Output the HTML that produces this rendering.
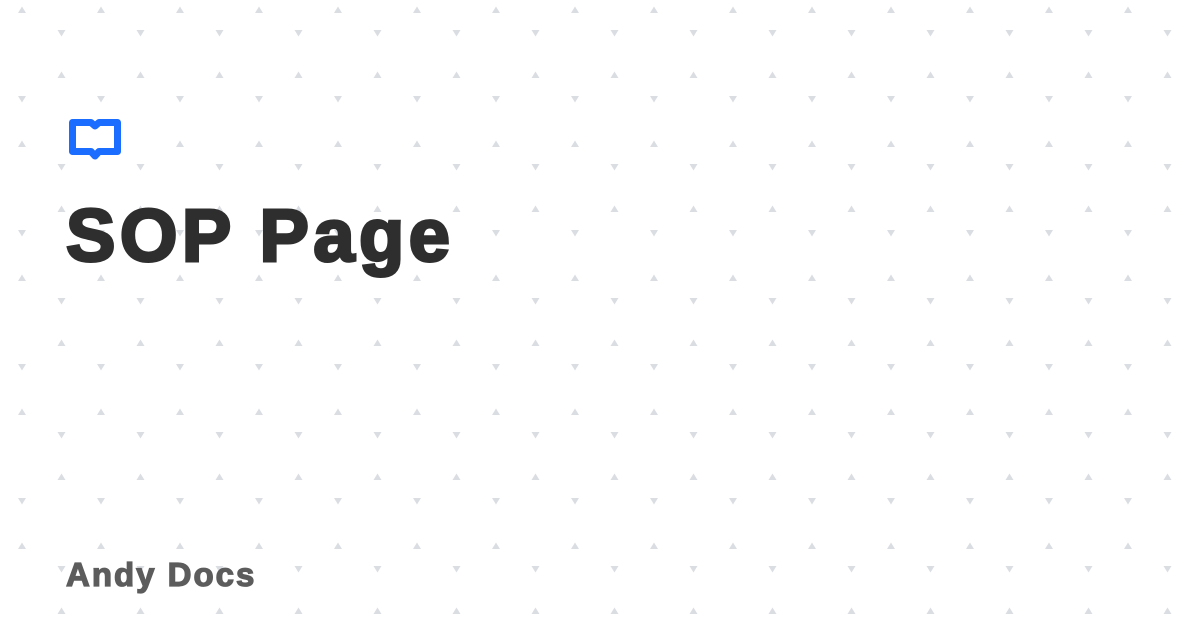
<!DOCTYPE html>
<html><head><meta charset="utf-8"><style>
html,body{margin:0;padding:0;}
body{width:1200px;height:630px;position:relative;background:#fff;overflow:hidden;font-family:"Liberation Sans",sans-serif;}
svg.bg{position:absolute;left:0;top:0;}
.t{position:absolute;left:66px;top:191px;font-size:74px;font-weight:bold;color:#2e2e2e;letter-spacing:4.5px;line-height:90px;-webkit-text-stroke:3px #2e2e2e;}
.s{position:absolute;left:66px;top:555px;font-size:33px;font-weight:bold;color:#5c5c5c;letter-spacing:2px;line-height:40px;-webkit-text-stroke:1.3px #5c5c5c;}
</style></head><body>
<svg class="bg" width="1200" height="630">
<defs><pattern id="p" x="0" y="0" width="79" height="134" patternUnits="userSpaceOnUse">
<g fill="#dadde2">
<path d="M18 13 L22 6.5 L26 13 Z"/>
<path d="M57.5 30 L65.5 30 L61.5 36.5 Z"/>
<path d="M57.5 78 L61.5 71.5 L65.5 78 Z"/>
<path d="M18 96 L26 96 L22 102.5 Z"/>
</g></pattern></defs>
<rect width="1200" height="630" fill="url(#p)"/>
<path d="M72.5 122.5 H91 L95 126 L99 122.5 H117.5 V151.5 H99 L95 156 L91 151.5 H72.5 Z" fill="#fff" stroke="#1a6dff" stroke-width="7" stroke-linejoin="round"/>
</svg>
<div class="t">SOP Page</div>
<div class="s">Andy Docs</div>
</body></html>
